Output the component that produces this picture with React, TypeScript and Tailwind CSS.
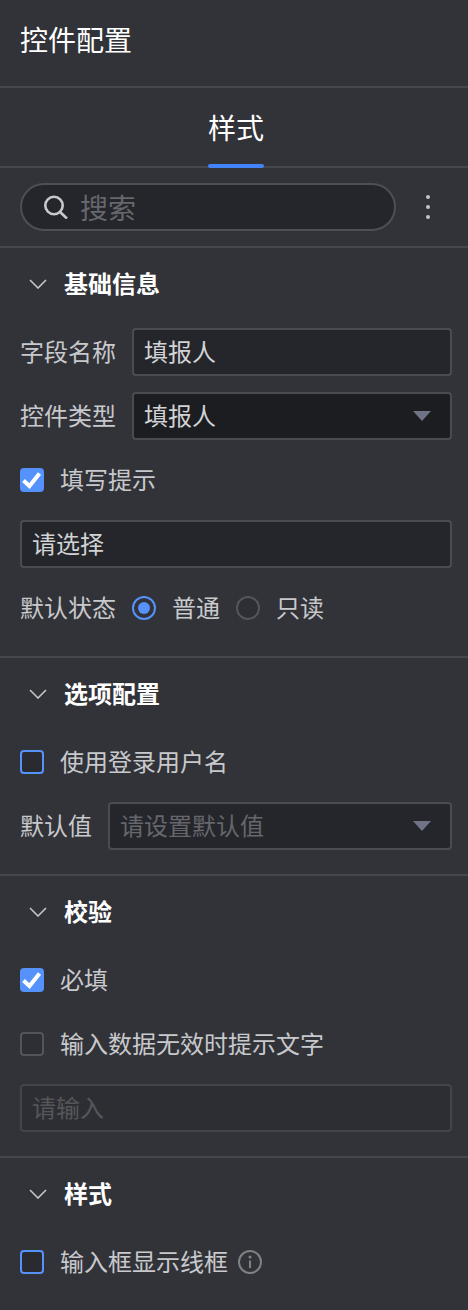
function SectionHead({ title }: { title: string }) {
  return (
    <div className="flex h-[72px] items-center pl-[29px]">
      <svg width="18" height="10" viewBox="0 0 18 10" fill="none" className="shrink-0">
        <path d="M1 1l8 8 8-8" stroke="#c4c5c8" strokeWidth="1.6" />
      </svg>
      <span className="ml-[17px] pb-0.5 text-[24px] leading-8 font-bold text-white">{title}</span>
    </div>
  );
}

function Caret() {
  return (
    <svg width="18" height="12" viewBox="0 0 18 12" className="shrink-0">
      <path d="M0 1h18L9 11z" fill="#6f7385" />
    </svg>
  );
}

function CheckRow({
  label,
  state,
  info,
}: {
  label: string;
  state: "checked" | "focus" | "off";
  info?: boolean;
}) {
  return (
    <div className="flex h-12 items-center">
      {state === "checked" ? (
        <span className="flex h-6 w-6 items-center justify-center rounded-[4px] bg-[#5692fb]">
          <svg width="24" height="24" viewBox="0 0 24 24" fill="none">
            <path d="M3.5 12.5l6 5.5L19.5 5.5" stroke="#fff" strokeWidth="4" />
          </svg>
        </span>
      ) : (
        <span
          className={
            state === "focus"
              ? "h-6 w-6 rounded-[4px] border-2 border-[#5692fb] bg-[#2a2b31]"
              : "h-6 w-6 rounded-[4px] border-2 border-[#54555c] bg-[#2e2f35]"
          }
        />
      )}
      <span className="ml-4 pb-0.5 text-[24px] leading-8 text-[#c8c9cc]">{label}</span>
      {info && (
        <svg width="24" height="24" viewBox="0 0 24 24" fill="none" className="ml-[10px] text-[#808185]">
          <circle cx="12" cy="12" r="11" stroke="currentColor" strokeWidth="2" />
          <path d="M12 10.5V18" stroke="currentColor" strokeWidth="2" />
          <circle cx="12" cy="7" r="1.5" fill="currentColor" />
        </svg>
      )}
    </div>
  );
}

function Box({
  text,
  className,
  textClass,
  caret,
}: {
  text: string;
  className: string;
  textClass: string;
  caret?: boolean;
}) {
  return (
    <div className={`flex h-12 items-center justify-between rounded-[4px] border-2 pl-[10px] pr-[19px] ${className}`}>
      <span className={`pb-0.5 text-[24px] leading-8 ${textClass}`}>{text}</span>
      {caret && <Caret />}
    </div>
  );
}

function FieldRow({ label, children }: { label: string; children: React.ReactNode }) {
  return (
    <div className="flex items-center gap-4">
      <span className="shrink-0 pb-0.5 text-[24px] leading-8 text-[#c8c9cc]">{label}</span>
      <div className="min-w-0 flex-1">{children}</div>
    </div>
  );
}

export default function App() {
  return (
    <div
      className="h-[1310px] w-[468px] overflow-hidden bg-[#323339]"
      style={{ fontFamily: '"Noto Sans CJK SC", "Noto Sans", sans-serif' }}
    >
      <div className="flex h-[86px] items-center px-5 pb-2 text-[28px] leading-9 text-white">控件配置</div>

      <div className="relative flex h-[82px] items-center justify-center border-y-2 border-[#46474d] pl-1">
        <span className="text-[28px] leading-9 text-white">样式</span>
        <span className="absolute bottom-[-2px] left-[208px] h-1 w-14 rounded-[2px] bg-[#4384f8]" />
      </div>

      <div className="flex h-20 items-center border-b-2 border-[#46474d] pl-5 pr-[38px]">
        <div className="flex h-12 w-[376px] items-center rounded-full border-2 border-[#4e4f55] bg-[#25262b] pl-[22px]">
          <svg width="24" height="24" viewBox="0 0 24 24" fill="none" className="shrink-0 text-[#c8c9cc]">
            <circle cx="10" cy="10.5" r="8.7" stroke="currentColor" strokeWidth="2.6" />
            <path d="M16 17l7 6.5" stroke="currentColor" strokeWidth="2.6" />
          </svg>
          <span className="ml-3 text-[28px] leading-9 text-[#66676c]">搜索</span>
        </div>
        <div className="ml-auto flex flex-col gap-[6px]">
          <span className="h-1 w-1 rounded-full bg-[#c4c5c8]" />
          <span className="h-1 w-1 rounded-full bg-[#c4c5c8]" />
          <span className="h-1 w-1 rounded-full bg-[#c4c5c8]" />
        </div>
      </div>

      <div className="border-b-2 border-[#46474d]">
        <SectionHead title="基础信息" />
        <div className="flex flex-col gap-4 pl-5 pr-4 pt-2 pb-6">
          <FieldRow label="字段名称">
            <Box text="填报人" className="border-[#4b4c52] bg-[#25262b]" textClass="text-[#d2d3d5]" />
          </FieldRow>
          <FieldRow label="控件类型">
            <Box text="填报人" className="border-[#4b4c52] bg-[#1c1d21]" textClass="text-[#d2d3d5]" caret />
          </FieldRow>
          <CheckRow label="填写提示" state="checked" />
          <Box text="请选择" className="border-[#4b4c52] bg-[#25262b]" textClass="text-[#d2d3d5]" />
          <div className="flex h-12 items-center">
            <span className="pb-0.5 text-[24px] leading-8 text-[#c8c9cc]">默认状态</span>
            <span className="ml-4 flex h-6 w-6 items-center justify-center rounded-full border-2 border-[#5692fb]">
              <span className="h-3 w-3 rounded-full bg-[#5692fb]" />
            </span>
            <span className="ml-4 pb-0.5 text-[24px] leading-8 text-[#c8c9cc]">普通</span>
            <span className="ml-4 h-6 w-6 rounded-full border-2 border-[#54555c] bg-[#2e2f35]" />
            <span className="ml-4 pb-0.5 text-[24px] leading-8 text-[#c8c9cc]">只读</span>
          </div>
        </div>
      </div>

      <div className="border-b-2 border-[#46474d]">
        <SectionHead title="选项配置" />
        <div className="flex flex-col gap-4 pl-5 pr-4 pt-2 pb-6">
          <CheckRow label="使用登录用户名" state="focus" />
          <FieldRow label="默认值">
            <Box text="请设置默认值" className="border-[#4b4c52] bg-[#25262b]" textClass="text-[#66676c]" caret />
          </FieldRow>
        </div>
      </div>

      <div className="border-b-2 border-[#46474d]">
        <SectionHead title="校验" />
        <div className="flex flex-col gap-4 pl-5 pr-4 pt-2 pb-6">
          <CheckRow label="必填" state="checked" />
          <CheckRow label="输入数据无效时提示文字" state="off" />
          <Box text="请输入" className="border-[#44454b] bg-[#2d2e33]" textClass="text-[#55565b]" />
        </div>
      </div>

      <SectionHead title="样式" />
      <div className="pl-5 pr-4 pt-2">
        <CheckRow label="输入框显示线框" state="focus" info />
      </div>
    </div>
  );
}
